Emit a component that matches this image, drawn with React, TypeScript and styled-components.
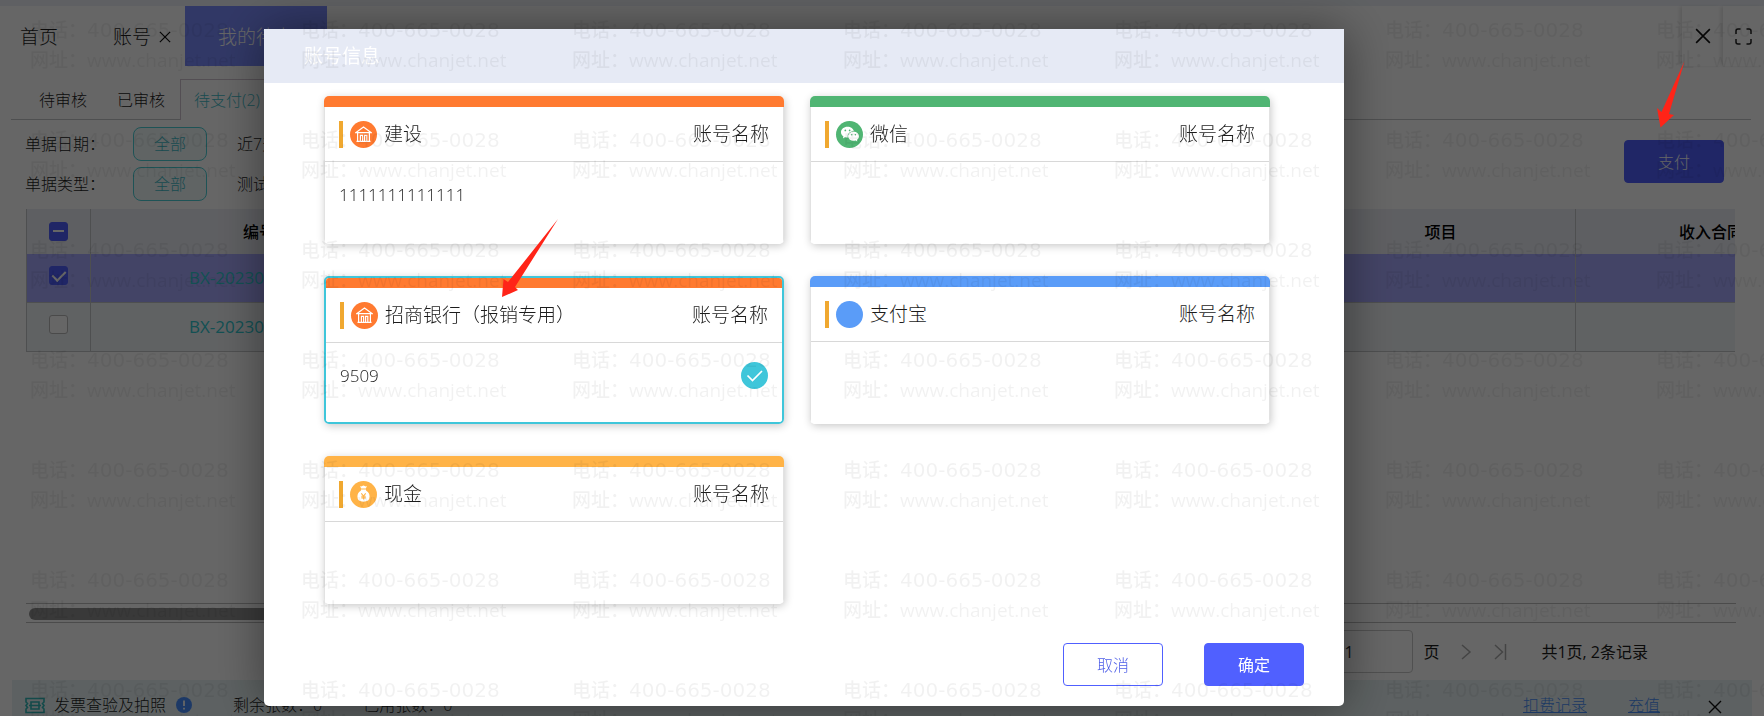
import React, { useState } from 'react';
import styled, { createGlobalStyle, css } from 'styled-components';
import { IoLogoWechat } from 'react-icons/io5';

const teal = '#3fc6da';
const indigo = '#5060ff';
const line = '#c4c6c8';

const GlobalStyle = createGlobalStyle`
  * { box-sizing: border-box; }
  body {
    margin: 0;
    background: #fff;
    color: #1c1c1c;
    font-family: "Open Sans", "Noto Sans CJK SC", sans-serif;
    font-size: 16px;
    font-weight: 300;
    line-height: 22px;
  }
  button, input { font: inherit; color: inherit; }
`;

/* ---------- page behind the dialog ---------- */

const Page = styled.div`
  display: flex;
  flex-direction: column;
  height: 100vh;
  overflow: hidden;
`;

const TopStrip = styled.div`
  flex: none;
  height: 6px;
  background: #eef1f8;
`;

const TabBar = styled.nav`
  flex: none;
  display: flex;
  height: 60px;
`;

const PageTab = styled.div<{ $active?: boolean; $end: number }>`
  display: flex;
  align-items: center;
  gap: 8px;
  padding: 2px ${p => p.$end}px 0 20px;
  font-size: 19px;
  ${p => p.$active && css`
    padding: 2px 33px 0;
    background: #7b8cff;
    color: #fff;
  `}
`;

const IconButton = styled.button`
  display: flex;
  align-items: center;
  justify-content: center;
  padding: 0;
  border: 0;
  background: none;
`;

const WindowTools = styled.div`
  display: flex;
  margin-left: auto;
`;

const WindowTool = styled(IconButton)`
  width: 41px;
  box-shadow: -3px 0 4px -1px rgba(0, 0, 0, 0.12);
`;

const SubTabs = styled.div`
  flex: none;
  display: flex;
  height: 41px;
  margin: 13px 13px 0 11px;
  padding-left: 13px;
  background: linear-gradient(${line}, ${line}) bottom / 100% 1px no-repeat;
`;

const SubTab = styled.button<{ $active?: boolean }>`
  padding: 0 15px;
  border: 0;
  background: none;
  ${p => p.$active && css`
    padding: 0 13px;
    border: 1px solid #d0c4d0;
    border-bottom: 0;
    background: #fff;
    color: #40bcc8;
  `}
`;

const FilterArea = styled.section`
  flex: none;
  display: flex;
  justify-content: space-between;
  align-items: flex-start;
  padding: 7px 40px 8px 25px;
`;

const Filters = styled.div`
  display: flex;
  flex-direction: column;
  gap: 6px;
`;

const FilterRow = styled.div`
  display: flex;
  align-items: center;
  height: 34px;
`;

const FilterLabel = styled.span`
  width: 108px;
`;

const Chip = styled.button`
  width: 74px;
  height: 34px;
  margin-right: 30px;
  padding: 0;
  border: 1px solid #4cd0d8;
  border-radius: 8px;
  background: #f0f9fa;
  color: #40bcc8;
`;

const Action = styled.button<{ $outline?: boolean; $bold?: boolean }>`
  width: 100px;
  height: 43px;
  padding: 0;
  border: 1px solid ${indigo};
  border-radius: 4px;
  background: ${p => (p.$outline ? '#fff' : indigo)};
  color: ${p => (p.$outline ? '#5060e8' : '#fff')};
  font-weight: ${p => (p.$bold ? 400 : 300)};
`;

const PayAction = styled(Action)`
  margin-top: 13px;
`;

const TableArea = styled.div`
  flex: 1;
  min-height: 0;
  margin: 0 29px 0 26px;
  overflow: hidden;
`;

const Table = styled.table`
  width: 1821px;
  table-layout: fixed;
  border-collapse: separate;
  border-spacing: 0;
  text-align: center;

  th, td {
    padding: 0;
    border-right: 1px solid ${line};
  }
  th:first-child, td:first-child { border-left: 1px solid ${line}; }
  th {
    height: 45px;
    background: #eceef5;
    color: #000;
    font-weight: 500;
  }
`;

const Row = styled.tr<{ $selected?: boolean }>`
  td {
    height: 49px;
    border-bottom: 1px solid ${line};
    background: ${p => (p.$selected ? '#a9aaff' : '#f1f4f7')};
  }
`;

const TickCell = styled.td`
  && { padding-bottom: 5px; }
`;

const CodeCell = styled.td`
  text-align: left;
`;

const CodeLink = styled.a`
  margin-left: 98px;
  color: #30c8d0;
  font-size: 17px;
  font-weight: 400;
  text-decoration: none;
`;

const Tick = styled.input<{ $partial?: boolean }>`
  appearance: none;
  display: block;
  position: relative;
  width: 19px;
  height: 19px;
  margin: 0 auto;
  border: 1px solid #b8b8b8;
  border-radius: 3px;
  background: #fff;

  &:checked {
    border-color: ${indigo};
    background: ${indigo};
  }
  &:checked::after {
    content: "";
    position: absolute;
    ${p => p.$partial ? css`
      left: 3px;
      top: 7px;
      width: 11px;
      height: 2px;
      background: #fff;
    ` : css`
      left: 5px;
      top: 1px;
      width: 6px;
      height: 11px;
      border: solid #fff;
      border-width: 0 2px 2px 0;
      transform: rotate(45deg);
    `}
  }
`;

const ScrollTrack = styled.div`
  flex: none;
  height: 20px;
  margin: 0 28px 0 26px;
  padding: 4px 3px;
  border: solid #bcbcbc;
  border-width: 1px 0;
`;

const ScrollThumb = styled.div`
  width: 60%;
  height: 12px;
  border-radius: 6px;
  background: #909090;
`;

const Pager = styled.div`
  flex: none;
  display: flex;
  align-items: center;
  justify-content: flex-end;
  height: 57px;
  padding-right: 116px;
  font-weight: 400;
`;

const PageInput = styled.input`
  width: 84px;
  height: 43px;
  margin-right: 10px;
  padding: 0 14px;
  border: 1px solid #c8c8c8;
  border-radius: 4px;
  background: #fff;
`;

const PagerButton = styled(IconButton)`
  margin-left: 20px;
`;

const PagerTotal = styled.span`
  margin-left: 34px;
`;

const InvoiceBar = styled.footer`
  flex: none;
  display: flex;
  align-items: flex-start;
  height: 36px;
  margin: 0 12px;
  padding: 14px 30px 0 13px;
  background: #e8f3f4;

  svg { flex: none; margin-top: 3px; }
`;

const InvoiceTitle = styled.span`
  margin: 0 10px 0 9px;
`;

const Counter = styled.span`
  margin-left: 41px;
`;

const BarLinks = styled.div`
  display: flex;
  gap: 41px;
  margin-left: auto;
`;

const BarLink = styled.a`
  color: #4a90f8;
  text-decoration: underline;
`;

const BarClose = styled(IconButton)`
  margin-left: 7px;
`;

/* ---------- dialog ---------- */

const Shade = styled.div`
  position: fixed;
  inset: 0;
  display: flex;
  align-items: flex-start;
  padding: 29px 0 0 264px;
  background: rgba(0, 0, 0, 0.6);
`;

const Dialog = styled.section`
  width: 1080px;
  max-width: 80vw;
  border-radius: 3px 3px 5px 5px;
  background: #fff;
  box-shadow: 1px 1px 50px rgba(0, 0, 0, 0.45);
`;

const DialogTitle = styled.h2`
  margin: 0;
  padding: 0 40px;
  background: #e6eaf5;
  color: #fff;
  font-size: 19px;
  font-weight: 400;
  line-height: 54px;
`;

const CardGrid = styled.div`
  display: grid;
  grid-template-columns: 1fr 1fr;
  grid-auto-rows: 148px;
  gap: 32px 26px;
  padding: 13px 74px 0 60px;
`;

const Card = styled.label<{ $selected: boolean }>`
  display: flex;
  flex-direction: column;
  position: relative;
  border-radius: 5px;
  overflow: hidden;
  box-shadow: 1px 2px 8px rgba(0, 0, 0, 0.22);
  border: ${p => (p.$selected ? 2 : 0)}px solid ${teal};

  input {
    position: absolute;
    opacity: 0;
    margin: 0;
  }
`;

const CardStripe = styled.div<{ $color: string; $selected: boolean }>`
  flex: none;
  height: ${p => (p.$selected ? 10 : 11)}px;
  background: ${p => p.$color};
`;

const CardInner = styled.div<{ $selected: boolean }>`
  flex: 1;
  background: #fff;
  ${p => !p.$selected && css`
    border: solid #e2e2e2;
    border-width: 0 1px;
  `}
`;

const CardHead = styled.div`
  display: flex;
  align-items: center;
  gap: 7px;
  height: 55px;
  padding: 0 14px;
  border-bottom: 1px solid #d8d8d8;
  font-size: 19px;
  line-height: 27px;
`;

const Accent = styled.span`
  width: 4px;
  height: 27px;
  background: #f0a830;
`;

const Badge = styled.span<{ $color: string }>`
  display: flex;
  align-items: center;
  justify-content: center;
  width: 27px;
  height: 27px;
  border-radius: 50%;
  background: ${p => p.$color};
  color: #fff;
`;

const CardKind = styled.span`
  margin-left: auto;
`;

const CardBody = styled.div`
  display: flex;
  align-items: center;
  justify-content: space-between;
  height: 27px;
  margin: 19px 14px 0;
  font-size: 17px;
`;

const DialogFooter = styled.div`
  display: flex;
  justify-content: flex-end;
  gap: 41px;
  padding: 39px 40px 20px;
`;

/* ---------- layers over everything ---------- */

const Watermark = styled.div`
  position: fixed;
  inset: 0;
  overflow: hidden;
  pointer-events: none;
`;

const WatermarkGrid = styled.div`
  display: grid;
  grid-template-columns: repeat(auto-fill, 271px);
  grid-auto-rows: 110px;
  width: calc(100% + 271px);
  color: rgba(0, 0, 0, 0.055);
  font-size: 19px;
  font-weight: 500;
  line-height: 30px;
`;

const WatermarkTile = styled.div`
  padding: 15px 0 0 30px;
  white-space: nowrap;
`;

const Phone = styled.span`
  font-family: "DejaVu Sans", sans-serif;
  font-weight: 400;
  font-size: 20px;
`;

const Arrow = styled.svg<{ $top: number; $left?: number; $right?: number }>`
  position: fixed;
  top: ${p => p.$top}px;
  ${p => p.$left !== undefined && `left: ${p.$left}px;`}
  ${p => p.$right !== undefined && `right: ${p.$right}px;`}
  pointer-events: none;
`;

/* ---------- icons ---------- */

const CrossIcon = ({ size }: { size: number }) => (
  <svg width={size} height={size} viewBox="0 0 14 14" stroke="#111" strokeWidth="1.4" fill="none">
    <path d="M1 1L13 13M13 1L1 13" />
  </svg>
);

const ExpandIcon = () => (
  <svg width="17" height="17" viewBox="0 0 17 17" stroke="#222" strokeWidth="1.5" fill="none">
    <path d="M1 6V3Q1 1 3 1H5.5M11.5 1H14Q16 1 16 3V6M16 11V14Q16 16 14 16H11.5M5.5 16H3Q1 16 1 14V11" />
  </svg>
);

const BankIcon = () => (
  <svg width="17" height="17" viewBox="0 0 17 17" stroke="#fff" strokeWidth="1.2" fill="none">
    <path d="M1 6.600L8.500 1L16 6.600ZM2.600 6.600V15M14.400 6.600V15M1.500 15.300H15.500M5.400 15V9.300H7.600V15M9.600 15V9.300H11.800V15" />
  </svg>
);

const MoneyBagIcon = () => (
  <svg width="15" height="18" viewBox="0 0 15 18">
    <path fill="#fff" d="M4 1Q5.2 1.8 6.2 1Q7.5 .2 8.8 1Q9.8 1.8 11 1L9.8 3.6H5.2ZM5 4.5H10V5.6Q13.6 7.6 13.6 11.6Q13.6 16.8 7.5 16.8Q1.4 16.8 1.4 11.6Q1.4 7.6 5 5.6Z" />
    <path stroke="#ffb347" strokeWidth="1.1" fill="none" d="M5.3 8.3L7.5 11L9.7 8.3M7.5 11V14.5M5.3 11.2H9.7M5.3 12.9H9.7" />
  </svg>
);

const CheckedIcon = () => (
  <svg width="27" height="27" viewBox="0 0 27 27" fill="none">
    <circle cx="13.5" cy="13.5" r="13.5" fill={teal} />
    <path d="M6.5 13.5L11.5 18.5L21 9" stroke="#fff" strokeWidth="1.7" />
  </svg>
);

const NextIcon = ({ last }: { last?: boolean }) => (
  <svg width="14" height="18" viewBox="0 0 14 18" stroke="#aaa" strokeWidth="1.5" fill="none">
    <path d={last ? 'M2 2L9.5 9L2 16M12.5 1V17' : 'M3 2L11 9L3 16'} />
  </svg>
);

const TicketIcon = () => (
  <svg width="20" height="17" viewBox="0 0 20 17" stroke="#30b8b8" strokeWidth="1.6" fill="none">
    <path d="M1 1.500H19V5L17.500 6.500L19 8.500L17.500 10.500L19 12V15.500H1V12L2.500 10.500L1 8.500L2.500 6.500L1 5ZM6 5H14V12H6ZM4 8.500H16" />
  </svg>
);

const InfoIcon = () => (
  <svg width="16" height="16" viewBox="0 0 16 16">
    <circle cx="8" cy="8" r="8" fill="#4a90ff" />
    <path d="M8 3.5V9M8 10.8V12.6" stroke="#fff" strokeWidth="1.8" />
  </svg>
);

type Account = { name: string; number: string; color: string; icon: React.ReactNode };

const accounts: Account[] = [
  { name: '建设', number: '1111111111111', color: '#ff7a30', icon: <BankIcon /> },
  { name: '微信', number: '', color: '#50b573', icon: <IoLogoWechat size={18} /> },
  { name: '招商银行（报销专用）', number: '9509', color: '#ff7a30', icon: <BankIcon /> },
  { name: '支付宝', number: '', color: '#5a9cf8', icon: null },
  { name: '现金', number: '', color: '#ffb347', icon: <MoneyBagIcon /> },
];

const filters = [
  { label: '单据日期：', next: '近7天' },
  { label: '单据类型：', next: '测试' },
];

export default function App() {
  const [chosen, setChosen] = useState(2);

  return (
    <>
      <GlobalStyle />
      <Page>
        <TopStrip />
        <TabBar>
          <PageTab $end={35}>首页</PageTab>
          <PageTab $end={14}>
            账号
            <IconButton aria-label="关闭账号"><CrossIcon size={12} /></IconButton>
          </PageTab>
          <PageTab $active $end={33}>我的待办</PageTab>
          <WindowTools>
            <WindowTool aria-label="关闭"><CrossIcon size={16} /></WindowTool>
            <WindowTool aria-label="全屏"><ExpandIcon /></WindowTool>
          </WindowTools>
        </TabBar>
        <SubTabs>
          <SubTab>待审核</SubTab>
          <SubTab>已审核</SubTab>
          <SubTab $active>待支付(2)</SubTab>
        </SubTabs>
        <FilterArea>
          <Filters>
            {filters.map(f => (
              <FilterRow key={f.label}>
                <FilterLabel>{f.label}</FilterLabel>
                <Chip>全部</Chip>
                {f.next}
              </FilterRow>
            ))}
          </Filters>
          <PayAction>支付</PayAction>
        </FilterArea>
        <TableArea>
          <Table>
            <colgroup>
              <col width="65" />
              <col width="337" />
              <col width="878" />
              <col width="270" />
              <col width="271" />
            </colgroup>
            <thead>
              <tr>
                <th><Tick type="checkbox" aria-label="全选" defaultChecked $partial /></th>
                <th>编号</th>
                <th />
                <th>项目</th>
                <th>收入合同</th>
              </tr>
            </thead>
            <tbody>
              {[true, false].map((selected, i) => (
                <Row key={i} $selected={selected}>
                  <TickCell><Tick type="checkbox" aria-label="选择单据" defaultChecked={selected} /></TickCell>
                  <CodeCell><CodeLink href="#">BX-20230</CodeLink></CodeCell>
                  <td />
                  <td />
                  <td />
                </Row>
              ))}
            </tbody>
          </Table>
        </TableArea>
        <ScrollTrack><ScrollThumb /></ScrollTrack>
        <Pager>
          <PageInput aria-label="页码" defaultValue="1" />
          页
          <PagerButton aria-label="下一页"><NextIcon /></PagerButton>
          <PagerButton aria-label="末页"><NextIcon last /></PagerButton>
          <PagerTotal>共1页, 2条记录</PagerTotal>
        </Pager>
        <InvoiceBar>
          <TicketIcon />
          <InvoiceTitle>发票查验及拍照</InvoiceTitle>
          <InfoIcon />
          <Counter>剩余张数：0</Counter>
          <Counter>已用张数：0</Counter>
          <BarLinks>
            <BarLink href="#">扣费记录</BarLink>
            <BarLink href="#">充值</BarLink>
            <BarClose aria-label="关闭"><CrossIcon size={14} /></BarClose>
          </BarLinks>
        </InvoiceBar>
      </Page>

      <Shade>
        <Dialog role="dialog" aria-labelledby="dialog-title">
          <DialogTitle id="dialog-title">账号信息</DialogTitle>
          <CardGrid>
            {accounts.map((a, i) => {
              const selected = i === chosen;
              return (
                <Card key={a.name} $selected={selected}>
                  <input type="radio" name="account" checked={selected} onChange={() => setChosen(i)} />
                  <CardStripe $color={a.color} $selected={selected} />
                  <CardInner $selected={selected}>
                    <CardHead>
                      <Accent />
                      <Badge $color={a.color}>{a.icon}</Badge>
                      <span>{a.name}</span>
                      <CardKind>账号名称</CardKind>
                    </CardHead>
                    <CardBody>
                      <span>{a.number}</span>
                      {selected && <CheckedIcon />}
                    </CardBody>
                  </CardInner>
                </Card>
              );
            })}
          </CardGrid>
          <DialogFooter>
            <Action $outline>取消</Action>
            <Action $bold>确定</Action>
          </DialogFooter>
        </Dialog>
      </Shade>

      <Watermark aria-hidden="true">
        <WatermarkGrid>
          {Array.from({ length: 49 }, (_, i) => (
            <WatermarkTile key={i}>
              <div>电话：<Phone>400-665-0028</Phone></div>
              <div>网址：www.chanjet.net</div>
            </WatermarkTile>
          ))}
        </WatermarkGrid>
      </Watermark>

      <Arrow $top={61} $right={79} width="28" height="67" viewBox="0 0 28 67" fill="#ff2418">
        <path d="M27.500 0L4.500 51L0 47L3.500 66.500L17 54L12 53Z" />
      </Arrow>
      <Arrow $top={218} $left={501} width="58" height="80" viewBox="0 0 58 80" fill="#ff2418">
        <path d="M57 1L7 64L2.500 61L1 79L17 72L14 69Z" />
      </Arrow>
    </>
  );
}
